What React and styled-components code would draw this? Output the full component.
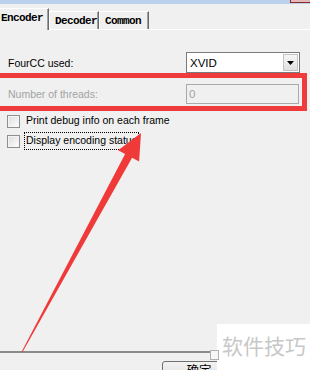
import React from "react";
import styled, { createGlobalStyle } from "styled-components";

const GlobalStyle = createGlobalStyle`
  html, body {
    margin: 0;
    padding: 0;
    background: #f0f0f0;
  }
  body {
    font-family: "Liberation Sans", Arial, sans-serif;
    font-size: 10.5px;
    color: #000;
  }
`;

const tabs = [
  { id: "enc", label: "Encoder", active: true },
  { id: "dec", label: "Decoder" },
  { id: "com", label: "Common" }
];

const checks = [
  { id: "debug", label: "Print debug info on each frame" },
  { id: "status", label: "Display encoding status", focused: true }
];

const App = () => {
  return (
    <>
      <GlobalStyle />
      <Window>
        <TitleStrip>
          <CloseEdge />
        </TitleStrip>
        <TabBar>
          {tabs.map(tab => (
            <Tab key={tab.id} active={tab.active}>
              {tab.label}
            </Tab>
          ))}
        </TabBar>
        <Panel>
          <Row>
            <Label>FourCC used:</Label>
            <Combo>
              <ComboText>XVID</ComboText>
              <ComboButton>
                <svg width="7" height="4" viewBox="0 0 7 4">
                  <path d="M0 0h7L3.5 4z" fill="#000" />
                </svg>
              </ComboButton>
            </Combo>
          </Row>
          <Highlight>
            <Label disabled>Number of threads:</Label>
            <Field>0</Field>
          </Highlight>
          {checks.map(c => (
            <CheckRow key={c.id}>
              <CheckBox />
              <CheckLabel focused={c.focused}>{c.label}</CheckLabel>
            </CheckRow>
          ))}
        </Panel>
        <Footer>
          <OkButton>确定</OkButton>
        </Footer>
        <Arrow width="310" height="370" viewBox="0 0 310 370">
          <polygon
            points="21.6,351.8 22.4,352.2 132.1,157.8 139.1,161.6 141,133 118.1,150.2 125.1,154"
            fill="#f03a3a"
          />
        </Arrow>
        <Watermark>
          <MiniIcon />
          软件技巧
        </Watermark>
      </Window>
    </>
  );
};

const Window = styled.div`
  position: relative;
  width: 310px;
  height: 370px;
  overflow: hidden;
  display: flex;
  flex-direction: column;
  background: #f0f0f0;
`;

const TitleStrip = styled.div`
  height: 4px;
  background: #b9d1ea;
  display: flex;
  justify-content: flex-end;
`;

const CloseEdge = styled.div`
  width: 19px;
  height: 2px;
  background: #e6b9b9;
  border: 1px solid #8c2b2b;
  border-top: none;
  margin-right: -1px;
`;

const TabBar = styled.div`
  height: 26px;
  display: flex;
  align-items: flex-end;
  border-bottom: 1px solid #ffffff;
  box-sizing: border-box;
`;

const Tab = styled.div`
  box-sizing: border-box;
  height: ${p => (p.active ? "22px" : "18px")};
  margin-bottom: ${p => (p.active ? "-1px" : "0")};
  margin-left: ${p => (p.active ? "-3px" : "0")};
  width: ${p => (p.active ? "52px" : "50px")};
  padding: ${p => (p.active ? "2px 0 0 3px" : "2px 0 0 5px")};
  background: #f0f0f0;
  border-left: 1px solid #ffffff;
  border-top: 1px solid #ffffff;
  border-right: 1px solid #696969;
  box-shadow: inset -1px 0 0 #a0a0a0;
  font-family: "Liberation Mono", "DejaVu Sans Mono", monospace;
  font-weight: bold;
  font-size: 11px;
  letter-spacing: -0.6px;
  line-height: 14px;
`;

const Panel = styled.div`
  flex: 1;
  padding-top: 22px;
  display: flex;
  flex-direction: column;
`;

const Row = styled.div`
  height: 21px;
  display: flex;
  align-items: center;
  justify-content: space-between;
  padding: 0 10px 0 8px;
`;

const Label = styled.span`
  color: ${p => (p.disabled ? "#a3a3a3" : "#000")};
`;

const Combo = styled.div`
  box-sizing: border-box;
  width: 114px;
  height: 21px;
  border: 1px solid #7a7a7a;
  background: #fff;
  display: flex;
  align-items: center;
  padding: 0 1px 0 3px;
`;

const ComboText = styled.span`
  flex: 1;
  font-size: 11.5px;
`;

const ComboButton = styled.div`
  box-sizing: border-box;
  width: 15px;
  height: 17px;
  border: 1px solid #c4c4c4;
  background: linear-gradient(#f6f6f6, #e0e0e0);
  display: flex;
  align-items: center;
  justify-content: center;
`;

const Highlight = styled.div`
  box-sizing: border-box;
  margin-left: -5px;
  width: 312px;
  height: 38px;
  border: 5px solid #ef3b3b;
  padding: 5px 3px 2px 8px;
  display: flex;
  align-items: center;
  justify-content: space-between;
`;

const Field = styled.div`
  box-sizing: border-box;
  width: 113px;
  height: 20px;
  border: 1px solid #a9a9a9;
  background: #f0f0f0;
  color: #a3a3a3;
  font-size: 11.5px;
  padding-left: 2px;
  display: flex;
  align-items: center;
`;

const CheckRow = styled.div`
  height: 20px;
  display: flex;
  align-items: center;
  padding-left: 7px;
  gap: 5px;
  &:first-of-type {
    margin-top: 1px;
  }
`;

const CheckBox = styled.div`
  box-sizing: border-box;
  width: 13px;
  height: 13px;
  border: 1px solid #8e8f8f;
  background: linear-gradient(135deg, #dcdcdc, #ffffff);
  box-shadow: inset 0 0 0 1px #f4f4f4;
`;

const CheckLabel = styled.span`
  padding: 1px 1px 2px;
  outline: ${p => (p.focused ? "1px dotted #000" : "none")};
  line-height: 13px;
`;

const Footer = styled.div`
  box-sizing: border-box;
  height: 19px;
  flex-shrink: 0;
  border-top: 2px solid #8a8a8a;
  padding-left: 162px;
  padding-top: 8px;
`;

const OkButton = styled.div`
  box-sizing: border-box;
  width: 74px;
  height: 23px;
  border: 1px solid #707070;
  border-radius: 3px;
  background: linear-gradient(#f2f2f2, #dddddd);
  text-align: center;
  font-family: "Noto Sans CJK SC", sans-serif;
  font-size: 12.5px;
  line-height: 14px;
  padding-top: 1px;
`;

const Arrow = styled.svg`
  position: absolute;
  left: 0;
  top: 0;
  pointer-events: none;
`;

const Watermark = styled.div`
  position: absolute;
  left: 217px;
  top: 324px;
  width: 93px;
  height: 46px;
  background: #fff;
  box-sizing: border-box;
  padding: 6px 0 0 5px;
  font-family: "Noto Sans CJK SC", sans-serif;
  font-size: 21px;
  line-height: 30px;
  color: #c8c8c8;
  white-space: nowrap;
`;

const MiniIcon = styled.span`
  position: absolute;
  left: -7px;
  top: 26px;
  width: 7px;
  height: 8px;
  background: #f7f7f7;
  border: 1px solid #b0b0b0;
`;

export default App;
